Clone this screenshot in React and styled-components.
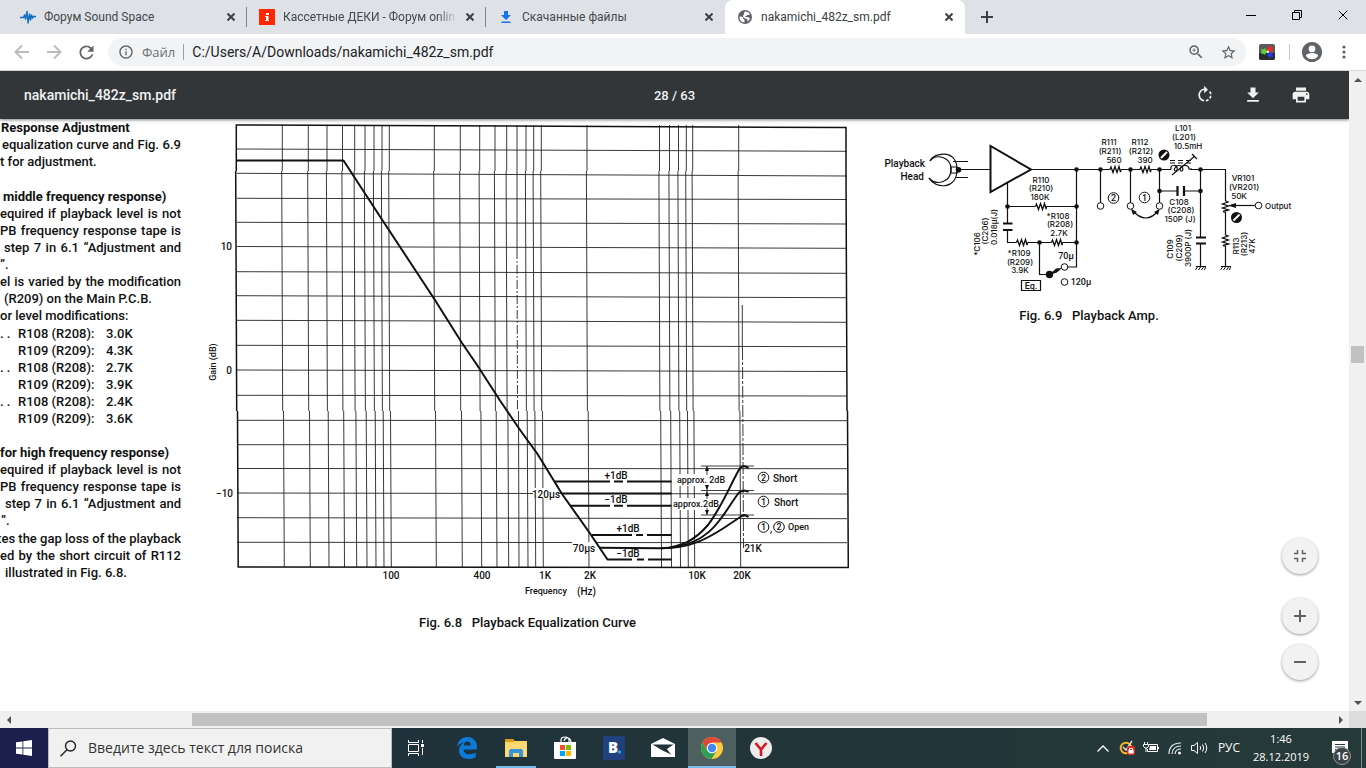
import React from "react";
import styled, { createGlobalStyle } from "styled-components";

const Global = createGlobalStyle`
  * { box-sizing: border-box; }
  html, body { margin: 0; padding: 0; }
  body { background: #fff; font-family: "Open Sans", "Noto Sans", sans-serif; overflow: hidden; }
  button { border: 0; padding: 0; background: none; color: inherit; font: inherit; display: flex; align-items: center; justify-content: center; }
  svg { display: block; flex: none; }
`;

const Screen = styled.div`
  display: flex;
  flex-direction: column;
  height: 100vh;
`;

/* ---------- browser frame ---------- */

const TabStrip = styled.header`
  display: flex;
  flex: none;
  height: 34px;
  padding-left: 8px;
  background: #dee1e6;
`;

const Tab = styled.div`
  position: relative;
  display: flex;
  align-items: center;
  flex: 0 1 ${(p) => (p.$active ? 240 : 239)}px;
  min-width: 0;
  padding: 0 8px 0 12px;
  gap: 8px;
  color: ${(p) => (p.$active ? "#3c4043" : "#45494d")};
  background: ${(p) => (p.$active ? "#fff" : "transparent")};
  border-radius: 8px 8px 0 0;
  font-family: Roboto, "Open Sans", sans-serif;
  font-size: 12px;
  line-height: 16px;

  &::after {
    content: "";
    position: absolute;
    right: 0;
    top: 7px;
    width: 1px;
    height: 20px;
    background: ${(p) => (p.$divider ? "#80868b" : "transparent")};
  }
`;

const TabTitle = styled.span`
  flex: 1;
  min-width: 0;
  overflow: hidden;
  white-space: nowrap;
  ${(p) => p.$fade && "mask-image: linear-gradient(to right, #000 90%, rgba(0, 0, 0, 0.2));"}
`;

const TabClose = styled.button`
  width: 16px;
  height: 16px;
  color: #3c4043;
`;

const NewTab = styled.button`
  width: 28px;
  height: 34px;
  margin-left: 8px;
  color: #3c4043;
`;

const WindowControls = styled.div`
  display: flex;
  margin-left: auto;
`;

const WindowButton = styled.button`
  width: 46px;
  height: 29px;
  color: #000;
`;

const AddressBar = styled.div`
  display: flex;
  align-items: center;
  flex: none;
  height: 37px;
  padding: 0 6px;
  border-bottom: 1px solid #d5d7da;
  background: #fff;
`;

const NavButton = styled.button`
  width: 32px;
  height: 32px;
  color: ${(p) => (p.$dim ? "#babcbe" : "#5f6368")};
`;

const Omnibox = styled.div`
  display: flex;
  align-items: center;
  flex: 1;
  height: 28px;
  margin: 0 5px 0 6px;
  padding: 0 10px;
  border-radius: 14px;
  background: #f1f3f4;
  color: #5f6368;
  font-size: 14px;
`;

const Scheme = styled.span`
  margin-left: 8px;
  padding-right: 8px;
  border-right: 1px solid #9aa0a6;
  font-size: 13px;
  line-height: 16px;
  color: #6c7074;
`;

const UrlInput = styled.input`
  flex: 1;
  min-width: 0;
  margin-left: 8px;
  padding: 0;
  border: 0;
  outline: 0;
  background: transparent;
  color: #202124;
  font: 14px/20px Roboto, sans-serif;
`;

const OmniButton = styled.button`
  width: 32px;
  height: 28px;
  margin-right: ${(p) => (p.$last ? "-8px" : "0")};
  color: #5f6368;
`;

const ToolDivider = styled.span`
  width: 1px;
  height: 16px;
  margin: 0 6px;
  background: #c4c7cb;
`;

/* ---------- document viewer ---------- */

const Viewer = styled.main`
  display: grid;
  grid-template-columns: minmax(0, 1fr) 17px;
  grid-template-rows: minmax(0, 1fr) 17px;
  flex: 1;
  min-height: 0;
`;

const Stage = styled.section`
  position: relative;
  display: flex;
  flex-direction: column;
  min-width: 0;
  overflow: hidden;
  background: #fff;
`;

const PdfBar = styled.div`
  position: relative;
  z-index: 1;
  display: grid;
  grid-template-columns: 1fr auto 1fr;
  align-items: center;
  flex: none;
  height: 48px;
  padding: 0 24px;
  background: #323639;
  color: #f1f1f1;
  box-shadow: 0 1px 3px rgba(0, 0, 0, 0.5);
  font-family: Roboto, sans-serif;
  font-size: 13px;
  font-weight: 500;
`;

const PdfTitle = styled.h1`
  margin: 0;
  font-size: 14px;
  font-weight: 500;
`;

const PdfActions = styled.div`
  display: flex;
  justify-content: flex-end;
`;

const PdfButton = styled.button`
  width: 48px;
  height: 48px;
`;

const Sheet = styled.article`
  display: flex;
  align-items: flex-start;
  font-family: Roboto, sans-serif;
  font-weight: 500;
  font-size: 13px;
  line-height: 17px;
  color: #111;
`;

const Column = styled.div`
  flex: none;
  width: 181px;
  margin-right: 24px;
  overflow: hidden;
`;

const Block = styled.div`
  margin-bottom: ${(p) => p.$gap || 0}px;
`;

const Heading = styled.h2`
  margin: 0;
  padding-left: ${(p) => p.$indent || 0}px;
  font-size: 13px;
  line-height: 17px;
  font-weight: 700;
  white-space: nowrap;
`;

const Line = styled.p`
  margin: 0;
  height: 17px;
  padding-left: ${(p) => p.$indent || 0}px;
  white-space: ${(p) => (p.$fill ? "normal" : "nowrap")};
  text-align-last: ${(p) => (p.$fill ? "justify" : "left")};
`;

const TightLine = styled(Line)`
  display: flex;
  justify-content: flex-end;
`;

const Values = styled.table`
  border-collapse: collapse;
  margin: 1px 0 17px;
  td, th { padding: 0; height: 17px; font-weight: 500; text-align: left; white-space: nowrap; }
  td:first-child { width: 18px; }
  th { width: 88px; }
`;

const Figure = styled.figure`
  flex: none;
  margin: 0 ${(p) => p.$after || 0}px 0 0;
`;

const Caption = styled.figcaption`
  text-align: center;
  white-space: pre;
  font-size: 13px;
  line-height: 20px;
`;

const ZoomControls = styled.div`
  position: absolute;
  right: 31px;
  bottom: 31px;
  display: flex;
  flex-direction: column;
  gap: 10px;
`;

const RoundButton = styled.button`
  width: 36px;
  height: 36px;
  margin-bottom: ${(p) => (p.$apart ? 14 : 0)}px;
  border-radius: 50%;
  background: #f2f2f2;
  color: #616161;
  box-shadow: 0 1px 3px rgba(0, 0, 0, 0.4);
`;

const VScroll = styled.div`
  display: flex;
  flex-direction: column;
  background: #f0f0f0;
`;

const HScroll = styled.div`
  display: flex;
  background: #f0f0f0;
`;

const ScrollButton = styled.button`
  flex: none;
  width: 17px;
  height: 17px;
  color: #505050;
`;

const VTrack = styled.div`
  flex: 1;
  padding: 0 2px;
  display: grid;
  grid-template-rows: 258fr 17px 331fr;
`;

const HTrack = styled.div`
  flex: 1;
  padding: 2px 0;
  display: grid;
  grid-template-columns: 175fr 1015fr 125fr;
`;

const VThumb = styled.span`
  grid-row: 2;
  background: #c1c1c1;
`;

const HThumb = styled.span`
  grid-column: 2;
  background: #c1c1c1;
`;

const Corner = styled.div`
  background: #dcdcdc;
`;

/* ---------- taskbar ---------- */

const Taskbar = styled.footer`
  display: flex;
  flex: none;
  height: 40px;
  background: linear-gradient(to right, #1c2e3d, #20343a 45%, #263a39);
  color: #fff;
`;

const StartButton = styled.button`
  width: 48px;
  height: 40px;
  background: #1a1f4b;
`;

const SearchBox = styled.label`
  display: flex;
  align-items: center;
  width: 344px;
  padding-left: 11px;
  gap: 11px;
  border: 1px solid #bcbcbc;
  background: #f1f1f1;
  color: #222;
`;

const SearchInput = styled.input`
  flex: 1;
  min-width: 0;
  padding: 0;
  border: 0;
  outline: 0;
  background: transparent;
  font: 14px/20px "Open Sans", "Noto Sans", sans-serif;
  &::placeholder { color: #333; opacity: 1; }
`;

const Pinned = styled.nav`
  display: flex;
  gap: 1px;
`;

const TaskButton = styled.button`
  position: relative;
  width: 48px;
  height: 40px;
  margin-right: ${(p) => (p.$first ? 2 : 0)}px;
  background: ${(p) => (p.$active ? "#4e5f60" : "transparent")};

  &::after {
    content: "";
    position: absolute;
    bottom: 0;
    left: ${(p) => (p.$active ? 0 : 4)}px;
    right: ${(p) => (p.$active ? 0 : 4)}px;
    height: 2px;
    background: ${(p) => (p.$open ? "#76b9ed" : "transparent")};
  }
`;

const Tray = styled.div`
  display: flex;
  align-items: center;
  margin-left: auto;
  font-size: 12px;
  line-height: 18px;
`;

const TrayButton = styled.button`
  width: 24px;
  height: 40px;
`;

const Language = styled.button`
  width: 36px;
  height: 40px;
`;

const Clock = styled.time`
  width: 68px;
  text-align: center;
  white-space: nowrap;
  font-size: 11px;
`;

const Notices = styled.button`
  position: relative;
  width: 46px;
  height: 40px;
  padding-left: 4px;
`;

const Badge = styled.span`
  position: absolute;
  left: 18px;
  top: 19px;
  width: 18px;
  height: 18px;
  border: 1px solid #8b9596;
  border-radius: 50%;
  background: #3a4445;
  font-size: 11px;
  line-height: 15px;
  font-weight: 600;
  text-align: center;
`;

const PeekEdge = styled.span`
  width: 5px;
  height: 40px;
  border-left: 1px solid #7d8989;
`;

/* ---------- small icons ---------- */

const Cross = ({ size = 8, w = 2 }) => (
  <svg width={size} height={size} viewBox="0 0 8 8" stroke="currentColor" strokeWidth={w * 8 / size} fill="none">
    <path d="M.5.5l7 7M7.5.5l-7 7" />
  </svg>
);

const Material = ({ d, size = 24 }) => (
  <svg width={size} height={size} viewBox="0 0 24 24" fill="currentColor"><path d={d} /></svg>
);

const Triangle = ({ d }) => (
  <svg width="8" height="8" viewBox="0 0 8 8" fill="currentColor"><path d={d} /></svg>
);

const WaveIcon = () => (
  <svg width="16" height="16" viewBox="0 0 16 16" fill="none" stroke="#0d6cc5" strokeWidth="1.400" strokeLinejoin="round">
    <path d="M0 8.500H3.500L4.500 6L5.500 10L7 2.500L8 14L9.500 5L10.500 11L11.500 6L12.500 9L13.500 7.500H16" />
  </svg>
);

const RedIcon = () => (
  <svg width="16" height="16" viewBox="0 0 16 16">
    <path fill="#ff2600" d="M0 0h16v16H0z" />
    <path fill="#fff" d="M7 4h3v2H7zM6 7h3.500v4H10v1H6v-1h1V8H6z" />
  </svg>
);

const DownloadMark = () => (
  <svg width="16" height="16" viewBox="0 0 16 16" fill="#1a73e8">
    <path d="M6 2h4v4h3l-5 5-5-5h3zM3.500 12.500h9V14h-9z" />
  </svg>
);

const GlobeMark = () => (
  <svg width="16" height="16" viewBox="0 0 16 16">
    <circle cx="8" cy="8" r="7" fill="#5f6368" />
    <path fill="#fff" d="M2.500 7.500c2 0 3.500.3 3.500 1.800 0 1 1.500.7 1.500 2v2.200C4.500 13.300 2.300 11 2.500 7.500zM8 2.400c2.500 0 4 1.200 4.900 2.600-.4 1-1.500 1-2.200.8-.5 1.200-1.500 1.100-2.400 1.100-.2 1 1 1.100 2 1.100 1.300 0 1.200 1 2.900 1-.6 2-1.700 3-2.700 3.700.1-1.200.2-2.200-.7-2.700C8 9.400 6 8.800 6 7c.1-1.100 1.200-1.300 1.200-2.300C7.200 4 7 3 8 2.400z" />
  </svg>
);

/* ---------- Fig. 6.8 ---------- */

const INK = "#111";

const decades = [
  282.3, 308.3, 327, 342.5, 354.7, 365, 374, 382, 389.3, 434.3, 460.3, 479.7,
  495, 506.7, 526, 533.7, 541.3, 587, 659.5, 669.5, 678.5, 686.3, 692.7, 738.7,
];

const gainRows = [
  [149, 151.3], [173.3, 176], [198.3, 199.5], [222.3, 224], [246.5, 248.3],
  [271.7, 273.3], [295.7, 297.7], [320.3, 322.3], [345.3, 346.7], [370, 371.5],
  [395.3, 396], [420.3, 420.7], [444.7, 444.7], [468.5, 468.7], [493, 494],
  [517.7, 518.7], [542.3, 542.7],
];

const strip = (x) =>
  `M${x} 125V171M${x - 0.6} 171L${x + 0.4} 411M${x + 1.2} 411L${x + 2} 567`;

const Mask = ({ x, y, w, h = 10 }) => <rect x={x} y={y - h / 2} width={w} height={h} fill="#fff" />;

const Label = ({ x, y, children, anchor = "middle", turn, size = 10, family = "Roboto, sans-serif" }) => (
  <text
    x={x}
    y={y}
    dominantBaseline="central"
    textAnchor={anchor}
    fontFamily={family}
    fontSize={size}
    fontWeight="500"
    fill={INK}
    xmlSpace="preserve"
    transform={turn ? `rotate(-90 ${x} ${y})` : undefined}
  >
    {children}
  </text>
);

const Ringed = ({ x, y, n }) => (
  <g>
    <circle cx={x} cy={y} r="5.300" fill="#fff" stroke={INK} strokeWidth="1" />
    <Label x={x} y={y} size={9}>{n}</Label>
  </g>
);

const ResponseChart = () => (
  <svg width="645" height="494" viewBox="205 119 645 494" role="img" aria-label="Playback Equalization Curve">
    <g fill="none" stroke="#222" strokeWidth=".9">
      {decades.map((x) => <path key={x} d={strip(x)} />)}
      {gainRows.map(([a, b]) => <path key={a} d={`M237 ${a}L847 ${b}`} />)}
      <path d="M517 125V250" />
      <path d="M517 250L517.500 411" strokeDasharray="9 2 2 2" />
      <path d="M518.500 411L519 567" />
      <path d="M742.300 305V348" />
      <path d="M742.500 348L743.500 548" strokeDasharray="12 2 3 2" />
    </g>
    <path d="M236.300 171V125L846 127.500V171M235.700 171L236.700 411M846 171L847 411M237.500 411L238.200 567L848.300 567.500L847.500 411" fill="none" stroke={INK} strokeWidth="1.500" />

    <Mask x={533} y={493} w={25} />
    <Mask x={572} y={547} w={24} />
    <Mask x={604} y={475.500} w={24} h={8} />
    <Mask x={604} y={499} w={24} h={8} />
    <Mask x={615} y={528} w={26} h={8} />
    <Mask x={615} y={553} w={26} h={8} />
    <Mask x={677} y={480} w={49} h={12} />
    <Mask x={673} y={504} w={45} h={12} />
    <Mask x={745} y={548} w={15} />

    <g fill="none" stroke={INK} strokeWidth="2" strokeLinejoin="round">
      <path d="M237 160.500H343.500L380 216.500L434.300 299L461.700 342.500L477.700 366L500 400.500L518 427L528 441L536.500 452.500L544 464.500L562 494L589 532L607.500 559.500H632M637 559.500H644M648 559.500H671.500" />
      <path d="M555 481.500H610M614 481.500H623M627 481.500H671.500" />
      <path d="M562 493.500H671.500" />
      <path d="M571 505.700H610M614 505.700H623M627 505.700H671.500" />
      <path d="M592 535H632M636 535H643M647 535H671.500" />
      <path d="M599 547.700L661 548.300C682 547 695 540 708 525C723 505 730 485 740 468Q744 464.500 748.500 468" />
      <path d="M661 548.300C690 548 707 537 719 521C727 511 733 500 739 492.500Q744 489 748.500 492" />
      <path d="M661 548.300C692 548 708 538 723 528.500L741 516.500Q744 513.500 748.500 517" />
    </g>
    <g fill="none" stroke={INK} strokeWidth=".8">
      <path d="M701 466H754M701 490.500H754M701 515H754M707 466V475M707 485V499M707 508V515" />
    </g>
    <path fill={INK} d="M707 466l2 5h-4zM707 490l2-5h-4zM707 491l2 5h-4zM707 515l2-5h-4z" />

    <Label x={546} y={494}>120µs</Label>
    <Label x={584} y={548}>70µs</Label>
    <Label x={616} y={475}>+1dB</Label>
    <Label x={616} y={499}>−1dB</Label>
    <Label x={628} y={528}>+1dB</Label>
    <Label x={628} y={553}>−1dB</Label>
    <Label x={701} y={480} size={9}>approx. 2dB</Label>
    <Label x={696} y={504} size={9}>approx.2dB</Label>
    <Ringed x={763.500} y={477.500} n="2" />
    <Label x={773} y={478} anchor="start">Short</Label>
    <Ringed x={763.500} y={501.500} n="1" />
    <Label x={774} y={502} anchor="start">Short</Label>
    <Ringed x={763.500} y={527} n="1" />
    <Label x={771} y={528}>,</Label>
    <Ringed x={779} y={527} n="2" />
    <Label x={788} y={527} anchor="start" size={9}>Open</Label>
    <Label x={753} y={548}>21K</Label>

    <Label x={232} y={246} anchor="end">10</Label>
    <Label x={232} y={370} anchor="end">0</Label>
    <Label x={233} y={493} anchor="end">−10</Label>
    <Label x={213} y={362} turn size={9}>Gain (dB)</Label>
    <Label x={391} y={575}>100</Label>
    <Label x={482} y={575}>400</Label>
    <Label x={545} y={575}>1K</Label>
    <Label x={590} y={575}>2K</Label>
    <Label x={697} y={575}>10K</Label>
    <Label x={742} y={575}>20K</Label>
    <Label x={525} y={591} anchor="start" size={9}>Frequency</Label>
    <Label x={577} y={591} anchor="start">(Hz)</Label>
  </svg>
);

/* ---------- Fig. 6.9 ---------- */

const Dot = ({ x, y, r = 2.3 }) => <circle cx={x} cy={y} r={r} fill={INK} />;
const Terminal = ({ x, y }) => <circle cx={x} cy={y} r="3.300" fill="#fff" stroke={INK} strokeWidth="1" />;

const Resistor = ({ x, y, vertical }) => (
  <g transform={`translate(${x} ${y})${vertical ? " rotate(90)" : ""}`}>
    <path d="M0 0H11" stroke="#fff" strokeWidth="3" />
    <path d="M0 0L1 -2.500L3 3L5 -3L7 3L9 -3L10.500 2.500L11 0" fill="none" stroke={INK} strokeWidth="1.300" />
  </g>
);

const Trimmer = ({ x, y }) => (
  <g>
    <circle cx={x} cy={y} r="5.500" fill={INK} />
    <path d={`M${x - 3} ${y + 3}L${x + 3} ${y - 3}`} stroke="#fff" strokeWidth="2" />
  </g>
);

const Ground = ({ x }) => (
  <path d={`M${x - 4.5} 266.500h10M${x - 3} 267l-2 3M${x} 267l-2 3M${x + 3} 267l-2 3M${x + 5} 267l-1 3`} stroke={INK} strokeWidth="1" fill="none" />
);

const notes = [
  [1041, 180, "R110"], [1041, 188, "(R210)"], [1040, 197, "180K"],
  [1058, 216, "*R108"], [1060, 224, "(R208)"], [1059, 233, "2.7K"],
  [1019, 253, "*R109"], [1020, 262, "(R209)"], [1020, 270, "3.9K"],
  [1109, 142, "R111"], [1110, 151, "(R211)"], [1114, 160, "560"],
  [1140, 142, "R112"], [1141, 151, "(R212)"], [1145, 160, "390"],
  [1183, 128, "L101"], [1184, 137, "(L201)"], [1188, 146, "10.5mH"],
  [1179, 202, "C108"], [1181, 210, "(C208)"], [1180, 219, "150P (J)"],
  [1243, 178, "VR101"], [1244, 187, "(VR201)"], [1239, 196, "50K"],
];

const turned = [
  [977, 244, "*C106"], [985, 231, "(C206)"], [994, 227, "0.018µ(J)"],
  [1170, 249, "C109"], [1179, 248, "(C209)"], [1188, 248, "3900P (J)"],
  [1236, 246, "R113"], [1244, 244, "(R213)"], [1252, 246, "47K"],
];

const AmpSchematic = () => (
  <svg width="418" height="187" viewBox="880 119 418 187" role="img" aria-label="Playback Amp.">
    <g fill="none" stroke={INK} strokeWidth="1.200">
      <path d="M930 161C934 152 957 149 957 169.500C957 190 935 189 929 178" />
      <path d="M930 161C936 153 951 157 951 169C951 183 936 186 929 178" />
      <path d="M951 167H957V173H951zM953 161.500H968M955 177.500H968M958 169.500H990" />
      <path d="M1031 169.500H1171M1190 169.500H1225.500V266M1200.500 169V237M1200.500 244V266" />
      <path d="M1007.500 183V223M1007.500 230V242.500H1076.500M1007.500 206.500H1076.500M1076.500 169.500V267H1068" />
      <path d="M1039.500 242.500V274.500H1049" />
      <path d="M1100.500 169V203M1130.500 169V203M1159.500 169V203M1160 191H1177M1184.500 191H1200.500" />
      <path d="M1132 210Q1146 226 1159 210" />
      <path d="M1171 169.500V167Q1171 165.500 1174 165.500C1178 165 1178 171 1175.500 171S1175 165.500 1179 165.500S1184 171 1181.500 171S1180 165.500 1185 165.500Q1189 165.500 1189 169H1192" />
      <path d="M1172 175L1195 156M1192 154L1197 159M1170 160.500h5M1178 160.500h5M1186 160.500h5M1170 163h5M1178 163h5M1186 163h5" />
      <path d="M1231 205.500H1255" />
      <path d="M1021.500 280.500H1040.500V290.500H1021.500z" />
    </g>
    <path d="M990.500 146V192L1031 169.500z" fill="#fff" stroke={INK} strokeWidth="2" />
    <path d="M1003 223.500H1012.500M1003 230H1012.500M1196 237.500H1206M1196 243.500H1206M1177.500 186V196M1184 186V196" stroke={INK} strokeWidth="2.200" />
    <path fill={INK} d="M1049 275L1056 268.500L1062 268L1057 272.500zM1228 205.500L1236 203V208zM1131 209L1137 212L1133 215zM1159.500 209L1154 212L1158 215z" />
    <Resistor x={1035.500} y={206.500} />
    <Resistor x={1016.500} y={242.500} />
    <Resistor x={1051.500} y={242.500} />
    <Resistor x={1110} y={169.500} />
    <Resistor x={1140} y={169.500} />
    <Resistor x={1225.500} y={201} vertical />
    <Resistor x={1225.500} y={235} vertical />
    <Dot x={958.500} y={169.700} r={2.800} />
    <Dot x={1076.500} y={169.500} /><Dot x={1076.500} y={206.500} /><Dot x={1076.500} y={242.500} />
    <Dot x={1007.500} y={206.500} /><Dot x={1039.500} y={242.500} /><Dot x={1049.500} y={274.500} r={3.700} />
    <Dot x={1100.500} y={169.500} /><Dot x={1130.500} y={169.500} /><Dot x={1159.500} y={169.500} />
    <Dot x={1159.500} y={191} /><Dot x={1200.500} y={169.500} /><Dot x={1200.500} y={191} />
    <Terminal x={1064.500} y={267} /><Terminal x={1064.500} y={282} />
    <Terminal x={1100.500} y={206} /><Terminal x={1130.500} y={206} /><Terminal x={1159.500} y={206} />
    <Terminal x={1258.500} y={205.500} />
    <Ringed x={1113.500} y={198} n="2" />
    <Ringed x={1144.500} y={197.500} n="1" />
    <Trimmer x={1164} y={155} />
    <Trimmer x={1236.500} y={217.500} />
    <Ground x={1200.500} />
    <Ground x={1225.500} />
    <Label x={925} y={163} anchor="end">Playback</Label>
    <Label x={924} y={176} anchor="end">Head</Label>
    <Label x={1066} y={256} size={9}>70µ</Label>
    <Label x={1081} y={282} size={9}>120µ</Label>
    <Label x={1031} y={286} size={9}>Eq.</Label>
    <Label x={1265} y={206} anchor="start" size={8} family="Inter, sans-serif">Output</Label>
    {notes.map(([x, y, t]) => <Label key={t} x={x} y={y} size={8} family="Inter, sans-serif">{t}</Label>)}
    {turned.map(([x, y, t]) => <Label key={t} x={x} y={y} size={8} family="Inter, sans-serif" turn>{t}</Label>)}
  </svg>
);

const parts = [
  [". .", "R108 (R208):", "3.0K"],
  ["", "R109 (R209):", "4.3K"],
  [". .", "R108 (R208):", "2.7K"],
  ["", "R109 (R209):", "3.9K"],
  [". .", "R108 (R208):", "2.4K"],
  ["", "R109 (R209):", "3.6K"],
];

const tabs = [
  { title: "Форум Sound Space", icon: <WaveIcon />, divider: true },
  { title: "Кассетные ДЕКИ - Форум online", icon: <RedIcon />, divider: true, fade: true },
  { title: "Скачанные файлы", icon: <DownloadMark /> },
  { title: "nakamichi_482z_sm.pdf", icon: <GlobeMark />, active: true },
];

export default function App() {
  return (
    <Screen>
      <Global />
      <TabStrip>
        {tabs.map((t) => (
          <Tab key={t.title} $active={t.active} $divider={t.divider}>
            {t.icon}
            <TabTitle $fade={t.fade}>{t.title}</TabTitle>
            <TabClose aria-label="Закрыть вкладку"><Cross /></TabClose>
          </Tab>
        ))}
        <NewTab aria-label="Новая вкладка">
          <svg width="12" height="12" viewBox="0 0 12 12"><path d="M6 0v12M0 6h12" stroke="currentColor" strokeWidth="2" /></svg>
        </NewTab>
        <WindowControls>
          <WindowButton aria-label="Свернуть">
            <svg width="10" height="10" viewBox="0 0 10 10"><path d="M0 5.500h10" stroke="currentColor" /></svg>
          </WindowButton>
          <WindowButton aria-label="Восстановить">
            <svg width="10" height="10" viewBox="0 0 10 10" fill="none" stroke="currentColor"><path d="M.5 2.500h7v7h-7zM2.500 2.500v-2h7v7h-2" /></svg>
          </WindowButton>
          <WindowButton aria-label="Закрыть"><Cross size={10} w={1} /></WindowButton>
        </WindowControls>
      </TabStrip>

      <AddressBar>
        <NavButton $dim aria-label="Назад">
          <svg width="16" height="16" viewBox="0 0 16 16" fill="none" stroke="currentColor" strokeWidth="2"><path d="M15 8H2M8 1.500L1.500 8L8 14.500" /></svg>
        </NavButton>
        <NavButton $dim aria-label="Вперёд">
          <svg width="16" height="16" viewBox="0 0 16 16" fill="none" stroke="currentColor" strokeWidth="2"><path d="M1 8h13M8 1.500L14.500 8L8 14.500" /></svg>
        </NavButton>
        <NavButton aria-label="Обновить">
          <Material size={21} d="M17.650 6.350C16.200 4.900 14.210 4 12 4c-4.420 0-7.990 3.580-7.990 8s3.570 8 7.990 8c3.730 0 6.840-2.550 7.730-6h-2.080c-.82 2.330-3.040 4-5.650 4-3.310 0-6-2.690-6-6s2.690-6 6-6c1.660 0 3.140.69 4.220 1.780L13 11h7V4l-2.350 2.350z" />
        </NavButton>
        <Omnibox>
          <Material size={16} d="M11 7h2v2h-2zm0 4h2v6h-2zm1-9C6.480 2 2 6.480 2 12s4.480 10 10 10 10-4.480 10-10S17.520 2 12 2zm0 18c-4.410 0-8-3.590-8-8s3.590-8 8-8 8 3.590 8 8-3.590 8-8 8z" />
          <Scheme>Файл</Scheme>
          <UrlInput aria-label="Адрес" defaultValue="C:/Users/A/Downloads/nakamichi_482z_sm.pdf" />
          <OmniButton aria-label="Масштаб">
            <Material size={18} d="M15.500 14h-.79l-.28-.27A6.470 6.470 0 0 0 16 9.500 6.500 6.500 0 1 0 9.500 16c1.610 0 3.090-.59 4.230-1.570l.27.28v.79l5 4.990L20.490 19l-4.990-5zm-6 0C7.010 14 5 11.990 5 9.500S7.010 5 9.500 5 14 7.010 14 9.500 11.990 14 9.500 14zM12 10h-2v2H9v-2H7V9h2V7h1v2h2v1z" />
          </OmniButton>
          <OmniButton $last aria-label="В закладки">
            <Material size={17} d="M22 9.240l-7.190-.62L12 2 9.190 8.630 2 9.240l5.460 4.730L5.820 21 12 17.270 18.180 21l-1.630-7.030L22 9.240zM12 15.400l-3.760 2.270 1-4.280-3.320-2.880 4.380-.38L12 6.100l1.710 4.040 4.380.38-3.320 2.880 1 4.280L12 15.400z" />
          </OmniButton>
        </Omnibox>
        <NavButton aria-label="Расширение">
          <svg width="16" height="16" viewBox="0 0 16 16">
            <rect width="16" height="16" rx="2" fill="#5a5a5a" />
            <path d="M0 9h16v5a2 2 0 0 1-2 2H2a2 2 0 0 1-2-2z" fill="#2c2c2c" />
            <path d="M10.500 1l1.500 2 2.500.5-1.500 2 1 2.500-3-.5-2 1V5.500L8 4l2-.8z" fill="#f3281f" />
            <path d="M2 5l2.500.5L6.500 4 7 6.500 9 8 6.500 9.500 5.500 11 4 9.500 2 10l.8-2.500z" fill="#5bd33b" />
            <path d="M10 8l2 1 2-.5-.5 2.500 1 2-2.500-.2-1.500 1.700-1-2.500L7.500 11l2-1z" fill="#2438f2" />
            <circle cx="8.800" cy="7.800" r="1.200" fill="#fff" />
          </svg>
        </NavButton>
        <ToolDivider />
        <NavButton aria-label="Профиль">
          <Material size={22} d="M12 1C5.900 1 1 5.900 1 12s4.900 11 11 11 11-4.900 11-11S18.100 1 12 1zm0 4a3.600 3.600 0 1 1 0 7.200A3.600 3.600 0 0 1 12 5zm0 15c-2.700 0-5.200-1.400-6.600-3.600 0-2.200 4.400-3.200 6.600-3.200s6.600 1 6.600 3.200C17.200 18.600 14.700 20 12 20z" />
        </NavButton>
        <NavButton aria-label="Меню">
          <svg width="4" height="14" viewBox="0 0 4 14" fill="currentColor"><circle cx="2" cy="2" r="1.600" /><circle cx="2" cy="7" r="1.600" /><circle cx="2" cy="12" r="1.600" /></svg>
        </NavButton>
      </AddressBar>

      <Viewer>
        <Stage>
          <PdfBar>
            <PdfTitle>nakamichi_482z_sm.pdf</PdfTitle>
            <span>28 / 63</span>
            <PdfActions>
              <PdfButton aria-label="Повернуть">
                <Material size={20} d="M15.550 5.550L11 1v3.070C7.060 4.560 4 7.920 4 12s3.050 7.440 7 7.930v-2.020c-2.840-.48-5-2.940-5-5.910s2.160-5.430 5-5.910V10l4.550-4.450zM19.930 11c-.17-1.390-.72-2.730-1.620-3.890l-1.420 1.420c.54.75.88 1.600 1.020 2.470h2.020zM13 17.900v2.020c1.390-.17 2.740-.71 3.900-1.610l-1.440-1.440c-.75.54-1.590.89-2.460 1.030zm3.890-2.420l1.420 1.410c.9-1.160 1.450-2.500 1.620-3.890h-2.020c-.14.87-.48 1.720-1.020 2.480z" />
              </PdfButton>
              <PdfButton aria-label="Скачать">
                <Material size={20} d="M19 9h-4V3H9v6H5l7 7 7-7zM5 18v2h14v-2H5z" />
              </PdfButton>
              <PdfButton aria-label="Печать">
                <Material size={20} d="M19 8H5c-1.660 0-3 1.340-3 3v6h4v4h12v-4h4v-6c0-1.660-1.340-3-3-3zm-3 11H8v-5h8v5zm3-7c-.55 0-1-.45-1-1s.45-1 1-1 1 .45 1 1-.45 1-1 1zm-1-9H6v4h12V3z" />
              </PdfButton>
            </PdfActions>
          </PdfBar>

          <Sheet>
            <Column>
              <Block $gap={18}>
                <Heading $indent={1}>Response Adjustment</Heading>
                <Line $fill $indent={2}>equalization curve and Fig. 6.9</Line>
                <Line>t for adjustment.</Line>
              </Block>
              <Block>
                <Heading $indent={3}>middle frequency response)</Heading>
                <Line $fill>equired if playback level is not</Line>
                <Line $fill>PB frequency response tape is</Line>
                <Line $fill $indent={4}>step 7 in 6.1 “Adjustment and</Line>
                <Line>”.</Line>
              </Block>
              <Block>
                <Line $fill>el is varied by the modification</Line>
                <Line $indent={4}>(R209) on the Main P.C.B.</Line>
                <Line>or level modifications:</Line>
              </Block>
              <Values>
                <tbody>
                  {parts.map(([lead, ref, value]) => (
                    <tr key={ref + value}>
                      <td>{lead}</td>
                      <th scope="row">{ref}</th>
                      <td>{value}</td>
                    </tr>
                  ))}
                </tbody>
              </Values>
              <Block $gap={1}>
                <Heading>for high frequency response)</Heading>
                <Line $fill>equired if playback level is not</Line>
                <Line $fill>PB frequency response tape is</Line>
                <Line $fill $indent={5}>step 7 in 6.1 “Adjustment and</Line>
                <Line $indent={1}>”.</Line>
              </Block>
              <Block>
                <TightLine>tes the gap loss of the playback</TightLine>
                <Line $fill>ed by the short circuit of R112</Line>
                <Line $indent={5}>illustrated in Fig. 6.8.</Line>
              </Block>
            </Column>
            <Figure $after={30}>
              <ResponseChart />
              <Caption>Fig. 6.8   Playback Equalization Curve</Caption>
            </Figure>
            <Figure>
              <AmpSchematic />
              <Caption>Fig. 6.9   Playback Amp.</Caption>
            </Figure>
          </Sheet>

          <ZoomControls>
            <RoundButton $apart aria-label="По размеру страницы">
              <svg width="12" height="12" viewBox="0 0 12 12" fill="none" stroke="currentColor" strokeWidth="1.500"><path d="M0 3.500h3.500V0M12 3.500H8.500V0M0 8.500h3.500V12M12 8.500H8.500V12" /></svg>
            </RoundButton>
            <RoundButton aria-label="Увеличить">
              <svg width="12" height="12" viewBox="0 0 12 12"><path d="M6 0v12M0 6h12" stroke="currentColor" strokeWidth="2" /></svg>
            </RoundButton>
            <RoundButton aria-label="Уменьшить">
              <svg width="12" height="12" viewBox="0 0 12 12"><path d="M0 6h12" stroke="currentColor" strokeWidth="2" /></svg>
            </RoundButton>
          </ZoomControls>
        </Stage>
        <VScroll>
          <ScrollButton aria-label="Вверх"><Triangle d="M0 6l4-4 4 4z" /></ScrollButton>
          <VTrack><VThumb /></VTrack>
          <ScrollButton aria-label="Вниз"><Triangle d="M0 2l4 4 4-4z" /></ScrollButton>
        </VScroll>
        <HScroll>
          <ScrollButton aria-label="Влево"><Triangle d="M6 0L2 4l4 4z" /></ScrollButton>
          <HTrack><HThumb /></HTrack>
          <ScrollButton aria-label="Вправо"><Triangle d="M2 0l4 4-4 4z" /></ScrollButton>
        </HScroll>
        <Corner />
      </Viewer>

      <Taskbar>
        <StartButton aria-label="Пуск">
          <svg width="16" height="16" viewBox="0 0 16 16" fill="#fff"><path d="M0 2.300L6.500 1.400V7.600H0zM7.300 1.300L16 0V7.600H7.300zM0 8.400H6.500V14.600L0 13.700zM7.300 8.400H16V16L7.300 14.700z" /></svg>
        </StartButton>
        <SearchBox>
          <svg width="17" height="17" viewBox="0 0 17 17" fill="none" stroke="currentColor" strokeWidth="1.400"><circle cx="10.500" cy="6" r="5" /><path d="M7 9.800L.5 16.300" /></svg>
          <SearchInput aria-label="Поиск" placeholder="Введите здесь текст для поиска" />
        </SearchBox>
        <Pinned>
          <TaskButton $first aria-label="Представление задач">
            <svg width="16" height="16" viewBox="0 0 16 16" fill="none" stroke="#fff"><path d="M.5 0v2.500h10V0M.5 16v-2.500h10V16M.5 4.500h10v7H.5zM14.500 0v3M14.500 8v7" /><path d="M13 4h3v3h-3z" fill="#fff" stroke="none" /></svg>
          </TaskButton>
          <TaskButton aria-label="Edge">
            <svg width="20" height="22" viewBox="0 0 20 22" fill="#0d7ad8"><path d="M0 10C.8 3.500 5 0 10.300 0 16.500 0 20 4.500 20 10v2.500H6.500c.2 3.300 3 4.800 6.200 4.800 2.300 0 4.300-.6 6-1.700v4.600c-2 1.200-4.300 1.800-7.200 1.800C6 22 2 18.800 2 13.500 2 10 4 7 7.200 5.500 4 6 1.500 7.500 0 10zm6.700-1.500h7.200c0-2.600-1.300-4-3.500-4-2.100 0-3.400 1.500-3.700 4z" /></svg>
          </TaskButton>
          <TaskButton $open aria-label="Проводник">
            <svg width="22" height="18" viewBox="0 0 22 18"><path d="M0 0h8l1.500 2H22v16H0z" fill="#fbd46a" /><path d="M0 0h8l1.500 2L8 3H0z" fill="#dd9c12" /><path d="M1 5h20v12H1z" fill="#fbd977" /><path d="M4 18v-6q0-2 2-2h10q2 0 2 2v6h-4v-4H8v4z" fill="#3793d8" /></svg>
          </TaskButton>
          <TaskButton aria-label="Магазин">
            <svg width="24" height="24" viewBox="0 0 24 24"><path d="M8 7V4q0-3 4-3t4 3v3M11 5q1-3.500 4-3t3 5" fill="none" stroke="#fff" strokeWidth="1.200" /><path d="M1 6h22v16q0 1-1 1H2q-1 0-1-1z" fill="#fff" /><path d="M7 9h5v5H7z" fill="#f25022" /><path d="M13 9h5v5h-5z" fill="#7fba00" /><path d="M7 15h5v5H7z" fill="#00a4ef" /><path d="M13 15h5v5h-5z" fill="#ffb900" /></svg>
          </TaskButton>
          <TaskButton aria-label="Booking">
            <svg width="24" height="24" viewBox="0 0 24 24"><path d="M3 0h18q2 0 2 2v19q0 3-3 3H1V2q0-2 2-2z" fill="#20417d" /><text x="6" y="17" fontFamily="Open Sans, sans-serif" fontWeight="800" fontSize="15" fill="#fff">B</text><circle cx="17.500" cy="16" r="1.700" fill="#1ba9f5" /></svg>
          </TaskButton>
          <TaskButton aria-label="Почта">
            <svg width="24" height="20" viewBox="0 0 24 20"><path d="M0 6L12 0l12 6v13H0z" fill="#fff" /><path d="M1.500 6.500h21L16 11l4 5.500-8.500-4z" fill="#20343a" /></svg>
          </TaskButton>
          <TaskButton $active $open aria-label="Chrome">
            <svg width="22" height="22" viewBox="0 0 22 22"><circle cx="11" cy="11" r="11" fill="#fccb3d" /><path d="M1.500 5.500A11 11 0 0 1 20.500 5.500H11L6.200 13.700z" fill="#e0473a" /><path d="M1.500 5.500A11 11 0 0 0 10.500 22L15.700 13.700H6.200z" fill="#2ba052" /><circle cx="11" cy="11" r="5.300" fill="#fff" /><circle cx="11" cy="11" r="4.200" fill="#4587f0" /></svg>
          </TaskButton>
          <TaskButton aria-label="Яндекс">
            <svg width="22" height="22" viewBox="0 0 22 22"><circle cx="11" cy="11" r="11" fill="#ececec" /><path d="M5.500 6L11 12.500L16.500 6M11 12v7" fill="none" stroke="#d8141c" strokeWidth="2.600" /></svg>
          </TaskButton>
        </Pinned>
        <Tray>
          <TrayButton aria-label="Скрытые значки">
            <svg width="12" height="7" viewBox="0 0 12 7" fill="none" stroke="#fff" strokeWidth="1.300"><path d="M.5 6.500L6 1l5.500 5.500" /></svg>
          </TrayButton>
          <TrayButton aria-label="Защита">
            <svg width="16" height="16" viewBox="0 0 16 16"><circle cx="7" cy="8" r="5.300" fill="none" stroke="#f3b521" strokeWidth="2" /><path d="M4 7l3 3 6-9" fill="none" stroke="#ddd" strokeWidth="1.500" /><rect x="8" y="6" width="8" height="9" rx="2" fill="#e02b20" /><path d="M9.500 10h5v3.500h-5z" fill="#fff" /><path d="M10.500 10V8.500h3V10" fill="none" stroke="#fff" /></svg>
          </TrayButton>
          <TrayButton aria-label="Батарея">
            <svg width="16" height="14" viewBox="0 0 16 14" fill="none" stroke="#fff"><path d="M6 3.500h8.500v7h-10V8" /><path d="M7 5h6v4H6z" fill="#fff" stroke="none" /><path d="M1.500 1v2M4.500 1v2M.5 3.500h5v2l-1.500 1.500h-2L.5 5.500zM3 7v4M15.500 6v2" /></svg>
          </TrayButton>
          <TrayButton aria-label="Сеть">
            <svg width="14" height="14" viewBox="0 0 14 14" fill="none" stroke="#e4e8e8" strokeWidth="1.200"><path d="M1 13Q1 2 13 2M4 13Q4.500 5 13 5M7 13Q7.500 8 13 8" /><circle cx="11.500" cy="12" r="1" fill="#fff" /></svg>
          </TrayButton>
          <TrayButton aria-label="Звук">
            <svg width="17" height="14" viewBox="0 0 17 14" fill="none" stroke="#fff"><path d="M.5 4.500H3l3.500-3v11L3 9.500H.5zM9 5q1.500 2 0 4M11.500 3.500q2.500 3.500 0 7M14 2q3.500 5 0 10" /></svg>
          </TrayButton>
          <Language>РУС</Language>
          <Clock>1:46<br />28.12.2019</Clock>
          <Notices aria-label="Уведомления">
            <svg width="16" height="15" viewBox="0 0 16 15"><path d="M0 0h16v12H6l-3 3v-3H0z" fill="#fff" /><path d="M3 3.500h10M3 6h10M3 8.500h6" stroke="#263a39" /></svg>
            <Badge>16</Badge>
          </Notices>
          <PeekEdge />
        </Tray>
      </Taskbar>
    </Screen>
  );
}
